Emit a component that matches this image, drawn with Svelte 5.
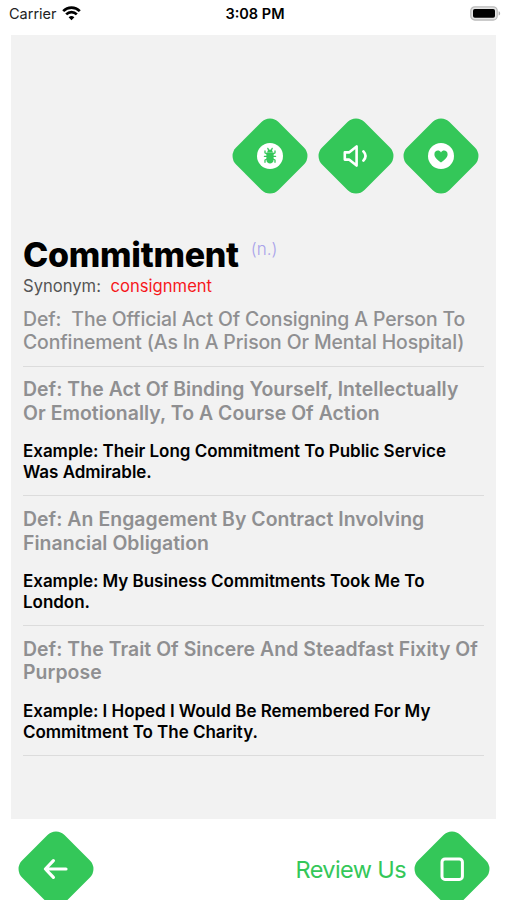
<script>
	const word = "Commitment";
	const partOfSpeech = "(n.)";
	const synonym = "consignment";

	const definitions = [
		{
			kind: "medium",
			text: "Def:\u00a0 The Official Act Of Consigning A Person To\nConfinement (As In A Prison Or Mental Hospital)",
		},
		{
			text: "Def: The Act Of Binding Yourself, Intellectually\nOr Emotionally, To A Course Of Action",
			example: "Example: Their Long Commitment To Public Service\nWas Admirable.",
		},
		{
			text: "Def: An Engagement By Contract Involving\nFinancial Obligation",
			example: "Example: My Business Commitments Took Me To\nLondon.",
		},
		{
			text: "Def: The Trait Of Sincere And Steadfast Fixity Of\nPurpose",
			example: "Example: I Hoped I Would Be Remembered For My\nCommitment To The Charity.",
		},
	];
</script>

<div class="screen">
	<header class="status-bar">
		<div class="carrier">
			<span>Carrier</span>
			<svg width="19" height="15" viewBox="0 0 19 15" fill="none" stroke="#000" stroke-width="2.7">
				<path d="M1.2 5.1a11.8 11.8 0 0 1 16.6 0" />
				<path d="M4.2 8.4a7.5 7.5 0 0 1 10.6 0" />
				<path d="M9.5 14.3 6.6 11.3a4.2 4.2 0 0 1 5.8 0z" fill="#000" stroke="none" />
			</svg>
		</div>
		<span class="time">3:08 PM</span>
		<svg class="battery" width="31" height="15" viewBox="0 0 31 15">
			<rect x="0.8" y="0.8" width="26.4" height="13.2" rx="4" fill="#e4e4e4" stroke="#bbb" stroke-width="1.3" />
			<rect x="3" y="3" width="22" height="8.8" rx="1.8" fill="#000" />
			<path d="M28.6 5.2c2 .6 2 3.8 0 4.4z" fill="#aaa" />
		</svg>
	</header>

	<main class="card">
		<div class="actions">
			<button class="diamond" aria-label="Report a bug">
				<svg width="26" height="26" viewBox="0 0 26 26">
					<circle cx="13" cy="13" r="13" fill="#fff" />
					<g fill="none" stroke="#34c759" stroke-width="1.3" stroke-linecap="round" stroke-linejoin="round">
						<path d="M10.8 5.3l.8 2M15.2 5.3l-.8 2" />
						<path d="M10 10.8 8 10V8M16 10.8l2-.8V8" />
						<path d="M10 13.3H7.4M16 13.3h2.6" />
						<path d="M10 16l-2 1v2.3M16 16l2 1v2.3" />
					</g>
					<path d="M10.2 9.4c0-4 5.6-4 5.6 0z" fill="#34c759" />
					<path d="M9.4 9.4h7.2v7.4c0 5-7.2 5-7.2 0z" fill="#34c759" />
				</svg>
			</button>
			<button class="diamond" aria-label="Play pronunciation">
				<svg width="26" height="26" viewBox="0 0 26 26" fill="none" stroke="#fff" stroke-width="2.6" stroke-linecap="round" stroke-linejoin="round">
					<path d="M1.8 9.4h4.2l7.6-6v19.2l-7.6-6H1.8z" />
					<path d="M20.4 8.4c2.6 2.8 2.6 6.4 0 9.2" />
				</svg>
			</button>
			<button class="diamond" aria-label="Add to favourites">
				<svg width="26" height="26" viewBox="0 0 26 26">
					<circle cx="13" cy="13" r="13" fill="#fff" />
					<path d="M13 19.6C9.2 16.8 6.4 14.3 6.4 11.2c0-3.9 4.9-4.9 6.6-1.7 1.7-3.2 6.6-2.2 6.6 1.7 0 3.1-2.8 5.6-6.6 8.4z" fill="#34c759" />
				</svg>
			</button>
		</div>

		<div class="title">
			<h1>{word}</h1>
			<span class="pos">{partOfSpeech}</span>
		</div>
		<p class="synonym">Synonym: <span>{synonym}</span></p>

		{#each definitions as item}
			<section class="entry {item.kind ?? ''}">
				<p class="definition">{item.text}</p>
				{#if item.example}
					<p class="example">{item.example}</p>
				{/if}
			</section>
		{/each}
	</main>

	<footer class="toolbar">
		<button class="diamond" aria-label="Back">
			<svg width="26" height="26" viewBox="0 0 26 26" fill="none" stroke="#fff" stroke-width="3.2" stroke-linecap="round" stroke-linejoin="round">
				<path d="M23 13H2.6M10.4 4.6 2.4 13l8 8.4" />
			</svg>
		</button>
		<div class="review">
			<span>Review Us</span>
			<button class="diamond" aria-label="Review">
				<svg width="26" height="26" viewBox="0 0 26 26" fill="none" stroke="#fff" stroke-width="3">
					<rect x="3" y="3" width="20.4" height="20.4" rx="3" />
				</svg>
			</button>
		</div>
	</footer>
</div>

<style>
	:global(body) {
		margin: 0;
		background: #fff;
		overflow: hidden;
	}

	.screen {
		display: flex;
		flex-direction: column;
		height: 900px;
		overflow: hidden;
		font-family: Inter, "Liberation Sans", sans-serif;
		color: #000;
	}

	h1,
	p {
		margin: 0;
	}

	.status-bar {
		display: grid;
		grid-template-columns: 1fr auto 1fr;
		align-items: center;
		height: 35px;
		padding: 0 6px 8px 9px;
		box-sizing: border-box;
		font-size: 14.5px;
	}

	.carrier {
		display: flex;
		align-items: center;
		gap: 5px;
		color: #222;
	}

	.time {
		font-weight: 600;
	}

	.battery {
		justify-self: end;
	}

	.card {
		height: 784px;
		flex: none;
		margin: 0 11px;
		padding: 90.5px 12px 0;
		box-sizing: border-box;
		background: #f2f2f2;
	}

	.actions {
		display: flex;
		justify-content: flex-end;
		gap: 25.5px;
		padding-right: 13px;
	}

	.diamond {
		position: relative;
		display: flex;
		align-items: center;
		justify-content: center;
		flex: none;
		width: 60px;
		height: 60px;
		padding: 0;
		border: none;
		background: none;
	}

	.diamond::before {
		content: "";
		position: absolute;
		inset: 0;
		border-radius: 12px;
		background: #34c759;
		transform: rotate(45deg);
	}

	.diamond svg {
		position: relative;
	}

	.title {
		display: flex;
		align-items: flex-start;
		gap: 12px;
		margin-top: 48.5px;
		height: 41.5px;
	}

	h1 {
		font-size: 34px;
		line-height: 42px;
		font-weight: 800;
		letter-spacing: -0.27px;
	}

	.pos {
		margin-top: 5px;
		font-size: 17px;
		line-height: 20px;
		font-weight: 300;
		color: #a9a3ea;
	}

	.synonym {
		font-size: 16.6px;
		line-height: 20px;
		color: #555;
	}

	.synonym span {
		margin-left: 5px;
		color: #f6181c;
	}

	.entry {
		padding: 11.7px 0 12px;
		border-bottom: 1px solid #dcdcdc;
	}

	.definition {
		white-space: pre;
		font-size: 19.4px;
		line-height: 23.5px;
		font-weight: 600;
		letter-spacing: 0.06px;
		color: #8f8f91;
	}

	.medium {
		padding: 12.2px 0 11px;
	}

	.medium .definition {
		font-weight: 500;
		letter-spacing: -0.1px;
	}

	.example {
		white-space: pre;
		margin-top: 16px;
		font-size: 17px;
		line-height: 21px;
		font-weight: 600;
		letter-spacing: -0.03px;
	}

	.toolbar {
		display: flex;
		justify-content: space-between;
		flex: none;
		padding: 20px 25px 0 26px;
	}

	.review {
		display: flex;
		align-items: center;
		gap: 16px;
		font-size: 23.5px;
		font-weight: 400;
		letter-spacing: -0.6px;
		color: #34c759;
	}
</style>
